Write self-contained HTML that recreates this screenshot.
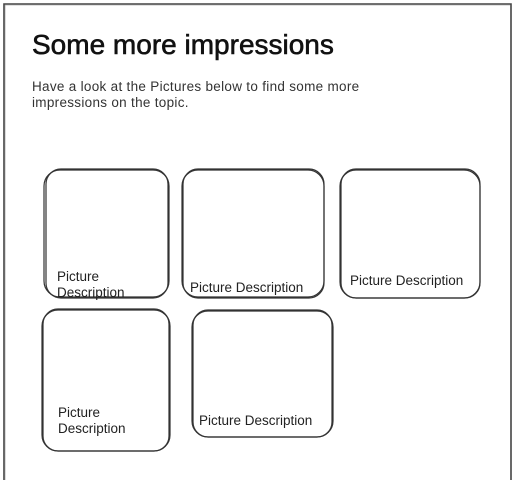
<!DOCTYPE html>
<html><head><style>
html,body{margin:0;padding:0;background:#fff;width:514px;height:480px;overflow:hidden}
svg{position:absolute;left:0;top:0}
.t{position:absolute;font-family:"Liberation Sans",sans-serif;color:#222;white-space:nowrap}
</style></head><body>
<svg width="514" height="480" viewBox="0 0 514 480" fill="none" stroke="#333" stroke-width="1.2">
<path d="M4 490 L4 4 L511 4 L511 490" stroke="#444" stroke-width="1.6"/>
<path d="M5 490 L5 5 L510 5" stroke="#888" stroke-width="0.6"/>
<g>
<rect x="44" y="170" width="125" height="127" rx="16"/>
<rect x="46" y="169" width="122" height="129" rx="15"/>
<rect x="182" y="170" width="142" height="127" rx="16"/>
<rect x="183" y="169" width="141" height="129" rx="15"/>
<rect x="340" y="170" width="140" height="128" rx="16"/>
<rect x="341" y="169" width="139" height="129" rx="15"/>
<rect x="42" y="310" width="128" height="141" rx="16"/>
<rect x="43" y="309" width="126" height="142" rx="15"/>
<rect x="192" y="311" width="141" height="126" rx="16"/>
<rect x="193" y="310" width="139" height="127" rx="15"/>
</g>
</svg>
<div class="t" style="left:32px;top:29px;font-size:28px;color:#111;-webkit-text-stroke:0.6px #111">Some more impressions</div>
<div class="t" style="left:32px;top:79px;font-size:13.5px;line-height:16px;color:#333;letter-spacing:0.3px">Have a look at the Pictures below to find some more<br>impressions on the topic.</div>
<div class="t" style="left:57px;top:269px;font-size:13.5px;line-height:16px">Picture<br>Description</div>
<div class="t" style="left:190px;top:280px;font-size:13.5px">Picture Description</div>
<div class="t" style="left:350px;top:273px;font-size:13.5px">Picture Description</div>
<div class="t" style="left:58px;top:405px;font-size:13.5px;line-height:16px">Picture<br>Description</div>
<div class="t" style="left:199px;top:413px;font-size:13.5px">Picture Description</div>
</body></html>
